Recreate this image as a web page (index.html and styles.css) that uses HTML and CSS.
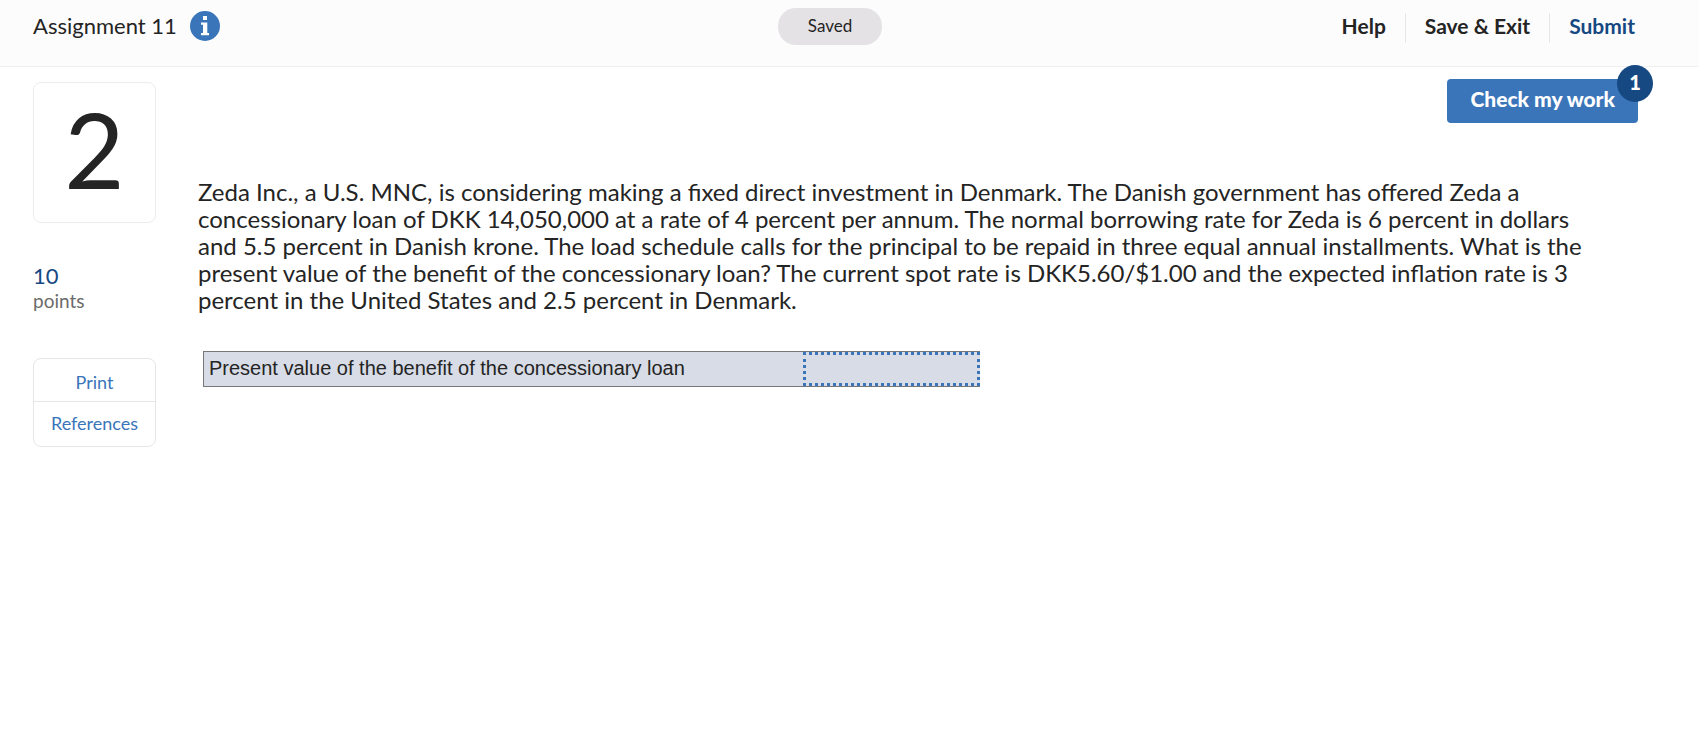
FILE: index.html
```html
<!DOCTYPE html>
<html lang="en">
<head>
<meta charset="utf-8">
<title>Assignment 11</title>
<link rel="stylesheet" href="styles.css">
</head>
<body>
<header class="topbar">
  <div class="title">
    <h1 class="title-text">Assignment 11</h1>
    <button class="info" type="button" aria-label="Assignment information">
      <svg class="info-icon" viewBox="0 0 30 30" aria-hidden="true">
        <circle cx="15" cy="15" r="15" fill="#3a75ba"/>
        <path fill="#fff" d="M13 5h4v4h-4zM11 11.500h6.300v10.500h1.700v2.300h-8v-2.300h2v-8.200h-2z"/>
      </svg>
    </button>
  </div>
  <span class="status">Saved</span>
  <nav class="actions">
    <a class="action" href="#help">Help</a>
    <a class="action" href="#exit">Save &amp; Exit</a>
    <a class="action action-submit" href="#submit">Submit</a>
  </nav>
</header>
<main class="page">
  <aside class="sidebar">
    <div class="number">2</div>
    <div class="points"><span class="points-value">10</span><span class="points-label">points</span></div>
    <div class="tools">
      <button class="tool" type="button">Print</button>
      <button class="tool" type="button">References</button>
    </div>
  </aside>
  <section class="content">
    <button class="check" type="button">Check my work<span class="badge">1</span></button>
    <p class="question">Zeda Inc., a U.S. MNC, is considering making a fixed direct investment in Denmark. The Danish government has offered Zeda a concessionary loan of DKK 14,050,000 at a rate of 4 percent per annum. The normal borrowing rate for Zeda is 6 percent in dollars and 5.5 percent in Danish krone. The load schedule calls for the principal to be repaid in three equal annual installments. What is the present value of the benefit of the concessionary loan? The current spot rate is DKK5.60/$1.00 and the expected inflation rate is 3 percent in the United States and 2.5 percent in Denmark.</p>
    <table class="answers">
      <tr>
        <th class="answer-label" scope="row"><label for="pv">Present value of the benefit of the concessionary loan</label></th>
        <td class="answer-cell"><input class="answer-input" id="pv" type="text"></td>
      </tr>
    </table>
  </section>
</main>
</body>
</html>
```
FILE: styles.css
```css
* { box-sizing: border-box; }

body {
  margin: 0;
  background: #fff;
  color: #242424;
  font-family: Lato, "Liberation Sans", sans-serif;
}

button {
  margin: 0;
  font-family: inherit;
  cursor: pointer;
}

.topbar {
  display: grid;
  grid-template-columns: 1fr auto 1fr;
  align-items: start;
  min-height: 67px;
  padding: 8px 64px 0 33px;
  background: #fcfcfc;
  border-bottom: 1px solid #efefef;
}

.title {
  display: flex;
  align-items: center;
  gap: 13px;
  height: 36px;
}

.title-text {
  margin: 0;
  font-size: 22px;
  font-weight: 400;
  line-height: 32px;
}

.info {
  padding: 0;
  border: 0;
  background: none;
}

.info-icon {
  display: block;
  width: 30px;
  height: 30px;
}

.status {
  margin-right: 8px;
  padding: 0 30px 2px;
  border-radius: 18px;
  background: #e4e2e5;
  font-size: 17px;
  line-height: 35px;
}

.actions {
  display: flex;
  justify-content: flex-end;
  padding-top: 5px;
}

.action {
  padding: 0 19px 4px;
  border-left: 1px solid #e8e8e8;
  color: #242424;
  font-size: 21px;
  font-weight: 700;
  line-height: 26px;
  text-decoration: none;
}

.action:first-child { border-left: 0; }

.action-submit {
  padding-right: 0;
  color: #164882;
}

.page {
  display: flex;
  gap: 42px;
  padding: 12px 61px 0 33px;
}

.sidebar {
  flex: none;
  width: 123px;
  padding-top: 3px;
}

.number {
  padding-bottom: 8px;
  border: 1px solid #ececec;
  border-radius: 8px;
  font-size: 104px;
  line-height: 131px;
  text-align: center;
}

.points {
  display: flex;
  flex-direction: column;
  margin: 40px 0 45px;
  font-size: 19px;
  line-height: 24px;
}

.points-value {
  color: #164882;
  font-size: 22px;
  line-height: 26px;
}

.points-label { color: #6b6b6b; }

.tools {
  display: flex;
  flex-direction: column;
  border: 1px solid #e6e6e6;
  border-radius: 8px;
}

.tool {
  padding: 4px 0 0;
  border: 0;
  background: none;
  color: #3a75ba;
  font-size: 18px;
  line-height: 38px;
}

.tool + .tool {
  padding: 2px 0 4px;
  border-top: 1px solid #e6e6e6;
}

.content {
  display: flex;
  flex: 1;
  flex-direction: column;
  align-items: flex-start;
}

.check {
  position: relative;
  align-self: flex-end;
  padding: 0 23px 4px;
  border: 0;
  border-radius: 4px;
  background: #3a75ba;
  color: #fff;
  font-size: 21px;
  font-weight: 900;
  line-height: 40px;
}

.badge {
  position: absolute;
  top: -14px;
  right: -15px;
  width: 36px;
  height: 37px;
  border-radius: 50%;
  background: #164882;
  font-size: 20px;
  line-height: 34px;
}

.question {
  margin: 55px 40px 0 0;
  font-size: 24px;
  line-height: 27px;
}

.answers {
  width: 777px;
  max-width: 100%;
  margin: 38px 0 0 5px;
  border: 1px solid #777;
  border-right: 0;
  border-spacing: 0;
  background: #d8dce6;
}

.answer-label {
  padding: 0 5px 2px;
  font-family: "Liberation Sans", sans-serif;
  font-size: 20px;
  font-weight: 400;
  line-height: 32px;
  text-align: left;
}

.answer-cell {
  width: 177px;
  padding: 0;
}

.answer-input {
  display: block;
  width: 100%;
  height: 34px;
  padding: 0 4px;
  border: 3px dotted #3a75ba;
  border-radius: 0;
  background: transparent;
  font: 20px "Liberation Sans", sans-serif;
}
```
